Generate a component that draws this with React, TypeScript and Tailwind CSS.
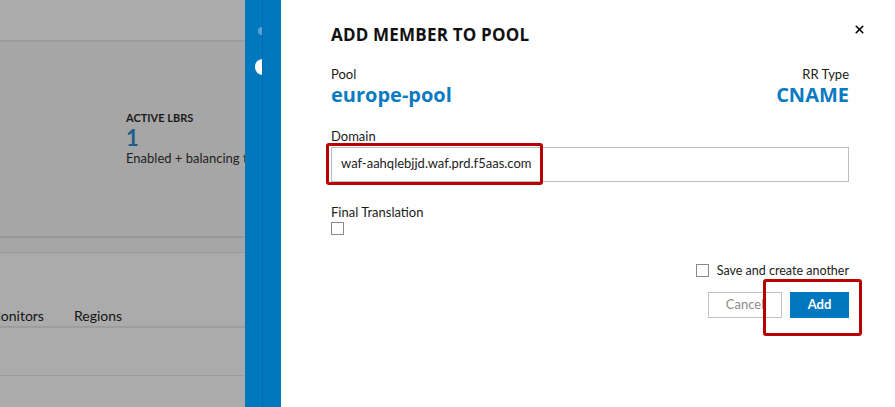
import { X } from 'lucide-react';

function BackgroundPage() {
  return (
    <div className="w-[245px] shrink-0 h-full overflow-hidden bg-[#ababab] font-['Lato',sans-serif]">
      <div className="h-[42px] border-b-2 border-[#9c9c9c]" />
      <div className="h-[194px] bg-[#a6a6a6] flex items-start pt-[72px]">
        <div className="w-[61px] shrink-0" />
        <div className="w-px h-[50px] bg-[#8e8e8e] mt-[1px]" />
        <div className="ml-[65px] -mt-[3px] whitespace-nowrap">
          <div className="text-[11px] font-bold text-[#1b1b1b] leading-[14px]">ACTIVE LBRS</div>
          <div className="text-[22px] font-bold text-[#1e5d8c] leading-[26px]">1</div>
          <div className="text-[13px] text-[#222] leading-[14px]">Enabled + balancing traffic</div>
        </div>
      </div>
      <div className="h-[17px] bg-[#a6a6a6] border-t-2 border-b border-[#999999]" />
      <div className="h-[75px] border-b-2 border-[#9d9d9d] flex items-end">
        <div className="flex gap-[30px] ml-[-12px] text-[14px] leading-[20px] text-[#141414] whitespace-nowrap">
          <span>Monitors</span>
          <span>Regions</span>
        </div>
      </div>
      <div className="h-[48px] border-b border-[#9d9d9d]" />
    </div>
  );
}

function BlueRail() {
  return (
    <div className="w-[36px] shrink-0 h-full bg-[#0077be] flex">
      <div className="w-[17px] h-full relative overflow-hidden">
        <div className="absolute left-[13px] top-[27px] w-[8px] h-[8px] rounded-full bg-[#5aa3d6]" />
        <div className="absolute left-[10px] top-[59px] w-[15px] h-[16px] rounded-full bg-white" />
      </div>
      <div className="w-px h-full bg-[#006cae]" />
    </div>
  );
}

function Checkbox() {
  return <div className="w-[13px] h-[13px] border border-[#8a8a8a] bg-white shrink-0" />;
}

export default function App() {
  return (
    <div className="w-[895px] h-[407px] flex overflow-hidden bg-white">
      <BackgroundPage />
      <BlueRail />
      <div className="flex-1 relative bg-white font-['Lato',sans-serif] text-[#1a1a1a]">
        <div className="pl-[50px] pr-[46px] pt-[22px]">
          <div className="flex items-center justify-between">
            <h2 className="text-[17px] font-bold tracking-[0.2px] font-['Open_Sans',sans-serif] text-[#111]">ADD MEMBER TO POOL</h2>
            <X className="w-[13px] h-[13px] -mr-[17px] -mt-[10px] text-black" strokeWidth={3} />
          </div>

          <div className="flex justify-between mt-[18px]">
            <div>
              <div className="text-[13px] leading-[16px]">Pool</div>
              <div className="text-[20px] font-bold text-[#0a7bc1] leading-[26px] font-['Open_Sans',sans-serif]">europe-pool</div>
            </div>
            <div className="text-right">
              <div className="text-[13px] leading-[16px]">RR Type</div>
              <div className="text-[20px] font-bold text-[#0a7bc1] leading-[26px] font-['Open_Sans',sans-serif]">CNAME</div>
            </div>
          </div>

          <div className="mt-[20px] text-[13px] leading-[16px]">Domain</div>
          <div className="mt-[3px] h-[35px] border border-[#bdbdbd] flex items-center px-[9px] text-[13px] text-[#222]">
            waf-aahqlebjjd.waf.prd.f5aas.com
          </div>

          <div className="mt-[22px] text-[13px] leading-[16px]">Final Translation</div>
          <div className="mt-[2px]">
            <Checkbox />
          </div>

          <div className="mt-[28px] flex justify-end items-center gap-[8px]">
            <Checkbox />
            <span className="text-[12.5px] leading-[16px] text-[#222]">Save and create another</span>
          </div>

          <div className="mt-[13px] flex justify-end gap-[8px]">
            <button className="w-[74px] h-[26px] border border-[#c2c2c2] text-[13px] text-[#8d8d8d] bg-white">Cancel</button>
            <button className="w-[59px] h-[26px] bg-[#0077be] text-white text-[13px] font-bold">Add</button>
          </div>
        </div>

        <div className="absolute left-[45px] top-[143px] w-[217px] h-[42px] border-[3px] border-[#b80000] rounded-[3px]" />
        <div className="absolute left-[482px] top-[279px] w-[99px] h-[57px] border-[3px] border-[#b80000] rounded-[3px]" />
      </div>
    </div>
  );
}
